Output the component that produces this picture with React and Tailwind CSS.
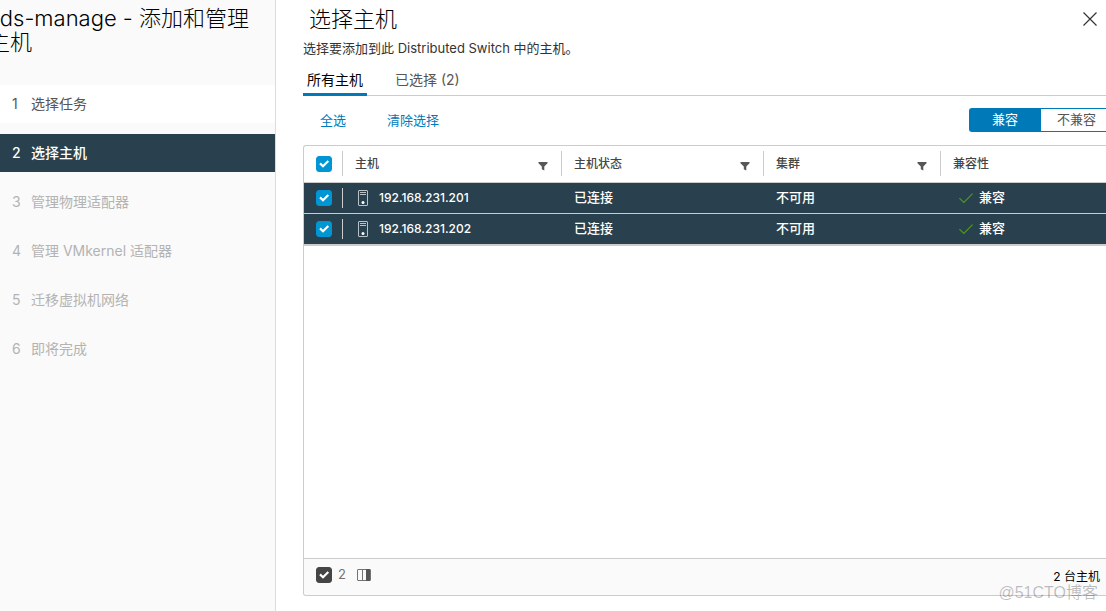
import { useState } from 'react'
import clsx from 'clsx'

const STEPS = ['选择任务', '选择主机', '管理物理适配器', '管理 VMkernel 适配器', '迁移虚拟机网络', '即将完成']
const CURRENT_STEP = 1

const HOSTS = [
  { name: '192.168.231.201', state: '已连接', cluster: '不可用', compat: '兼容' },
  { name: '192.168.231.202', state: '已连接', cluster: '不可用', compat: '兼容' },
]

const COLUMNS = [
  { label: '主机', filter: true },
  { label: '主机状态', filter: true },
  { label: '集群', filter: true },
  { label: '兼容性', filter: false },
]

function Checkbox({ label, checked, onChange, dark }) {
  return (
    <span className="grid size-4 shrink-0">
      <input
        type="checkbox"
        aria-label={label}
        checked={checked}
        onChange={onChange}
        className={clsx(
          'col-start-1 row-start-1 size-4 appearance-none rounded-[3px] border',
          dark ? 'border-[#454545] bg-[#454545]' : 'border-[#0095d3] bg-white checked:bg-[#0095d3]'
        )}
      />
      {checked && (
        <svg viewBox="0 0 16 16" className="pointer-events-none col-start-1 row-start-1 size-4" fill="none" stroke="#fff" strokeWidth="2.2">
          <path d="M4 7.4 7 10.2 12.3 5" />
        </svg>
      )}
    </span>
  )
}

function FilterIcon() {
  return (
    <svg viewBox="0 0 10 10" className="size-[10px]" fill="#565656">
      <path d="M.5 1h9v1.2L6.3 5.6V9.5L3.8 8.3V5.6L.5 2.2z" />
    </svg>
  )
}

function HostIcon() {
  return (
    <svg viewBox="0 0 12 16" className="h-4 w-3 shrink-0" fill="none" stroke="#b9c2c7">
      <rect x="1.5" y=".5" width="9" height="15" rx=".5" />
      <path d="M3 2.5h6M3 4.5h6" />
      <circle cx="6" cy="12.5" r="1.5" fill="#fff" stroke="none" />
    </svg>
  )
}

function CheckIcon() {
  return (
    <svg viewBox="0 0 14 12" className="h-3 w-[14px] shrink-0" fill="none" stroke="#4f9a19" strokeWidth="1.1">
      <path d="M.4 6.2 4.8 10.5 13.6 1.6" />
    </svg>
  )
}

function ColumnsIcon() {
  return (
    <svg viewBox="0 0 14 12" className="h-3 w-[14px]" fill="none" stroke="#737373">
      <rect x=".5" y=".5" width="13" height="11" rx=".5" />
      <path d="M5.5 1v10" />
      <rect x="9" y="0" width="4" height="12" fill="#565656" stroke="none" />
    </svg>
  )
}

function Sidebar() {
  return (
    <aside className="w-[276px] shrink-0 overflow-hidden border-r border-[#dcdcdc] bg-[#fafafa]">
      <h1 className="-ml-3 h-[85px] pt-[6px] pr-6 text-[22px] leading-6 font-light text-black">
        vds-manage - 添加和管理主机
      </h1>
      <nav className="flex flex-col gap-[11px]">
        {STEPS.map((step, i) => (
          <button
            key={step}
            disabled={i > CURRENT_STEP}
            className={clsx(
              'flex h-[38px] items-center px-3 text-left text-sm',
              i < CURRENT_STEP && 'bg-white text-[#565656]',
              i === CURRENT_STEP && 'bg-[#29414e] font-medium text-white',
              i > CURRENT_STEP && 'text-[#b3b3b3]'
            )}
          >
            <span className="w-[19px]">{i + 1}</span>
            {step}
          </button>
        ))}
      </nav>
    </aside>
  )
}

export default function App() {
  const [selected, setSelected] = useState(HOSTS.map(h => h.name))

  const toggleHost = (name) => {
    setSelected(selected.includes(name) ? selected.filter(n => n !== name) : [...selected, name])
  }

  const selectAll = () => setSelected(HOSTS.map(h => h.name))
  const clearAll = () => setSelected([])
  const allSelected = selected.length === HOSTS.length

  return (
    <div className="relative flex min-h-screen overflow-hidden bg-white font-['Inter','Noto_Sans_CJK_SC',sans-serif] text-[13px] text-[#333]">
      <Sidebar />

      <main className="flex min-w-0 flex-1 flex-col pb-[15px] pl-[27px]">
        <header className="flex h-9 items-center justify-between pt-px pr-2 pl-[6px]">
          <h2 className="text-[22px] leading-8 font-light text-black">选择主机</h2>
          <button aria-label="关闭" className="size-4">
            <svg viewBox="0 0 16 16" className="size-4" stroke="#333" strokeWidth="1.2">
              <path d="M1.5 1.5l13 13M14.5 1.5l-13 13" />
            </svg>
          </button>
        </header>
        <p className="flex h-[26px] items-center">选择要添加到此 Distributed Switch 中的主机。</p>

        <div className="flex h-[34px] gap-6 border-b border-[#ccc] text-sm">
          <button className="-mb-px border-b-3 border-[#0079b8] px-1 pt-1 text-black">所有主机</button>
          <button className="-mb-px border-b-3 border-transparent px-1 pt-1 text-[#565656]">已选择 ({selected.length})</button>
        </div>

        <div className="flex h-[49px] items-center justify-between pl-[17px]">
          <div className="flex gap-[41px] text-[#0079b8]">
            <button onClick={selectAll}>全选</button>
            <button onClick={clearAll}>清除选择</button>
          </div>
          <div className="-mt-px flex h-6">
            <button className="w-[72px] rounded-l-[3px] bg-[#0079b8] text-white">兼容</button>
            <button className="w-[65px] border-y border-[#0079b8] pl-[6px] text-[#565656]">不兼容</button>
          </div>
        </div>

        <section className="flex flex-1 flex-col rounded-l-[3px] border border-r-0 border-[#ccc]">
          <table className="w-full table-fixed border-collapse text-left">
            <colgroup>
              <col className="w-[38px]" />
              <col className="w-[219px]" />
              <col className="w-[202px]" />
              <col className="w-[177px]" />
              <col />
            </colgroup>
            <thead>
              <tr className="h-9 border-b border-[#ccc] text-xs text-[#454545]">
                <th className="pl-3">
                  <Checkbox label="全选" checked={allSelected} onChange={allSelected ? clearAll : selectAll} />
                </th>
                {COLUMNS.map(col => (
                  <th key={col.label} className="font-medium">
                    <div className="flex h-[25px] items-center justify-between border-l border-[#ccc] pr-[13px] pl-3">
                      {col.label}
                      {col.filter && <button aria-label="筛选" className="pt-1"><FilterIcon /></button>}
                    </div>
                  </th>
                ))}
              </tr>
            </thead>
            <tbody>
              {HOSTS.map(host => {
                const on = selected.includes(host.name)
                return (
                  <tr
                    key={host.name}
                    className={clsx('h-[31px] border-b border-[#ccc] font-medium last:h-8 last:border-b-2', on && 'bg-[#29414e] text-white')}
                  >
                    <td className="pl-3">
                      <Checkbox label={host.name} checked={on} onChange={() => toggleHost(host.name)} />
                    </td>
                    <td>
                      <div className="flex h-5 items-center gap-[10px] border-l border-[#ccc] pl-[14px] text-xs">
                        <HostIcon />
                        {host.name}
                      </div>
                    </td>
                    <td className="pl-[13px]">{host.state}</td>
                    <td className="pl-[13px]">{host.cluster}</td>
                    <td className="pl-[19px]">
                      <div className="flex items-center gap-[6px]">
                        <CheckIcon />
                        {host.compat}
                      </div>
                    </td>
                  </tr>
                )
              })}
            </tbody>
          </table>

          <footer className="mt-auto flex h-[37px] items-center rounded-bl-[3px] border-t border-[#ccc] bg-[#fafafa] pr-[6px] pb-1 pl-3">
            <Checkbox dark label="已选择的主机" checked={selected.length > 0} onChange={clearAll} />
            <span className="w-[25px] pl-[6px] text-[#737373]">{selected.length}</span>
            <button aria-label="列"><ColumnsIcon /></button>
            <span className="ml-auto pt-[3px] text-xs text-black">{HOSTS.length} 台主机</span>
          </footer>
        </section>
      </main>

      <div className="pointer-events-none absolute right-2 bottom-[6px] font-['Liberation_Sans','Noto_Sans_CJK_SC',sans-serif] text-base text-black/25">
        @51CTO博客
      </div>
    </div>
  )
}
